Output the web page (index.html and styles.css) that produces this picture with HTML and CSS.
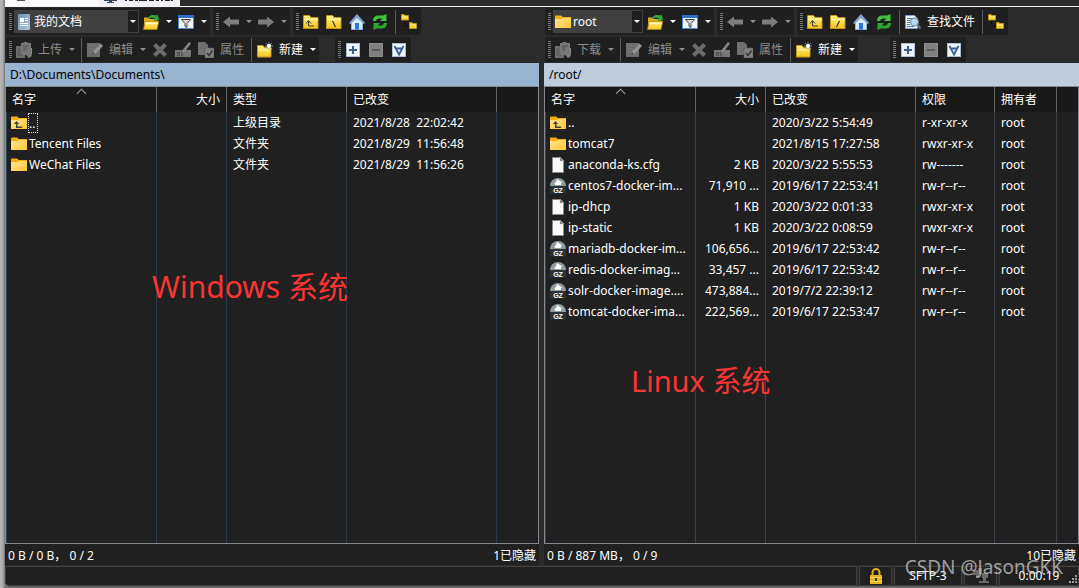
FILE: index.html
```
<!DOCTYPE html>
<html lang="zh-CN">
<head>
<meta charset="utf-8">
<title>/root/ - WinSCP</title>
<link rel="stylesheet" href="styles.css">
</head>
<body>
<svg width="0" height="0" class="defs" aria-hidden="true">
  <defs>
    <linearGradient id="gold" x1="0" y1="0" x2="0" y2="1"><stop offset="0" stop-color="#fff08a"/><stop offset="1" stop-color="#f5c518"/></linearGradient>
    <linearGradient id="amber" x1="0" y1="0" x2="1" y2="1"><stop offset="0" stop-color="#ffe696"/><stop offset="1" stop-color="#ffc62e"/></linearGradient>
    <linearGradient id="sky" x1="0" y1="0" x2="1" y2="1"><stop offset="0" stop-color="#6f93b5"/><stop offset="1" stop-color="#a9c8e2"/></linearGradient>
  </defs>
  <symbol id="i-docs" viewBox="0 0 16 16"><rect x="2" y="0" width="12" height="16" rx="1" fill="url(#sky)"/><path d="M4 4h4v4H4z" fill="#fff"/><path d="M9 4.500h3M9 6.500h3M4 9.500h8M4 11.500h8" stroke="#fff"/></symbol>
  <symbol id="i-folder" viewBox="0 0 16 16"><path d="M0 2.500Q0 1.500 1 1.500H6Q7 1.500 7.500 3H16V7H0z" fill="#f7ae0a"/><path d="M0 5H6.500L8 4H16V13.500Q16 14 15.500 14H.5Q0 14 0 13.500z" fill="url(#amber)"/></symbol>
  <symbol id="i-up" viewBox="0 0 16 16"><use href="#i-folder"/><path d="M3 9L5.500 6 8 9zM5 8h1.500v3.500H11V13H5z" fill="#424242"/></symbol>
  <symbol id="i-open" viewBox="0 0 16 16"><path d="M1 3.500h5l1 1.500h7V10H1z" fill="#d9ac20"/><path d="M.5 15.500L2 7.500H15.700L14 15.500z" fill="url(#gold)" stroke="#b88a10" stroke-width=".7"/><path d="M2.500 9.500H14.500" stroke="#fff8c0"/><path d="M5 5Q6 .5 10.500 1L13.500 1.500 14.500 0 16 6 10 7 11.500 4.500Q8 3 5 5z" fill="#2fa43b"/></symbol>
  <symbol id="i-filter" viewBox="0 0 16 16"><rect x=".5" y="1.500" width="15" height="13" fill="#eef4fb" stroke="#4f86cf"/><path d="M0 1h16v3H0z" fill="#2f6fc9"/><path d="M3.500 5.500h9L9 9.500V13.500L7 12.500V9.500z" fill="#dcdcdc" stroke="#444"/></symbol>
  <symbol id="i-back" viewBox="0 0 16 16"><path d="M0 8L7 2.500V5.500H16V10.500H7V13.500z" fill="#7d7d7d"/></symbol>
  <symbol id="i-fwd" viewBox="0 0 16 16"><path d="M16 8L9 2.500V5.500H0V10.500H9V13.500z" fill="#7d7d7d"/></symbol>
  <symbol id="i-yfold" viewBox="0 0 16 16"><path d="M.5 2Q.5 1.500 1 1.500H6.500L8 3.500H15V14.500H.5z" fill="url(#gold)" stroke="#c5971a"/><path d="M1 5.500h14" stroke="#fff6b0"/></symbol>
  <symbol id="i-parent" viewBox="0 0 16 16"><use href="#i-yfold"/><path d="M3 9.500L5.500 6.500 8 9.500M5.500 7V12H11" stroke="#3c3c3c" fill="none"/></symbol>
  <symbol id="i-bslash" viewBox="0 0 16 16"><use href="#i-yfold"/><path d="M6.500 7L9.500 13" stroke="#3c3c3c" stroke-width="1.200"/></symbol>
  <symbol id="i-slash" viewBox="0 0 16 16"><use href="#i-yfold"/><path d="M9.500 7L6.500 13" stroke="#3c3c3c" stroke-width="1.200"/></symbol>
  <symbol id="i-home" viewBox="0 0 16 16"><path d="M2.500 7.500L8 2.500 13.500 7.500V15.500H2.500z" fill="#dcebfa" stroke="#8fb4de"/><path d="M0 9L8 0 16 9 14.800 10 8 4 1.200 10z" fill="#7fa3d0"/><path d="M6 9h4v6.500H6z" fill="#2a78e0"/></symbol>
  <symbol id="i-refresh" viewBox="0 0 16 16"><path d="M1 7Q1 1.500 6.500 1.500H11.500L14.500 0V7H8L10.500 4.500H7Q4.500 4.500 4 7z" fill="#43c03e"/><path d="M15 9Q15 14.500 9.500 14.500H4.500L1.500 16V9H8L5.500 11.500H9Q11.500 11.500 12 9z" fill="#2ea82c"/></symbol>
  <symbol id="i-sync" viewBox="0 0 16 16"><path d="M.5.5H3L4 1.500H7.500V6H.5zM8.500 8.500H11L12 9.500H15.500V14.500H8.500z" fill="#f3cf2b" stroke="#c39a18" stroke-width=".8"/><path d="M1 3h6M9 11h6" stroke="#fff3a0"/><path d="M3.500 7v5H8" stroke="#050505" stroke-dasharray="1 1" fill="none"/></symbol>
  <symbol id="i-find" viewBox="0 0 16 16"><path d="M.5 1.500h9l3 3V14.500H.5z" fill="#eaf2fb" stroke="#7fa0c8"/><path d="M2 4.500h6M2 6.500h3M2 8.500h3M2 10.500h3M2 12.500h7" stroke="#5b7fb0"/><circle cx="9.500" cy="8" r="4" fill="#b9d8f2" stroke="#6d8299"/><path d="M12.500 11L15.500 14.500" stroke="#60738a" stroke-width="2"/></symbol>
  <symbol id="i-transfer" viewBox="0 0 16 16"><path d="M0 4h9v12H0z" fill="#6e6e6e"/><path d="M5 1h2l1-1h3l1 1h3v10l1 3-3 2-3-3H5z" fill="#777"/><path d="M1.500 7h3M1.500 9h3M1.500 11h3M1.500 13h5M7 4h6M7 6h4M7 8h3" stroke="#545454"/><path d="M15.500 6v6l-3 2.500" stroke="#8a8a8a" fill="none"/></symbol>
  <symbol id="i-edit" viewBox="0 0 16 16"><path d="M0 1h13v14H0z" fill="#6c6c6c"/><path d="M2 4h7M2 7h5M2 10h3" stroke="#7d7d7d"/><path d="M5 13L6 9.500 13.500 1.500 16 4 8.500 12z" fill="#929292"/><path d="M5 13l1-3 2 2z" fill="#444"/></symbol>
  <symbol id="i-delete" viewBox="0 0 16 16"><path d="M2.500 2.500L13.500 13.500M13.500 2.500L2.500 13.500" stroke="#6c6c6c" stroke-width="4"/></symbol>
  <symbol id="i-rename" viewBox="0 0 16 16"><path d="M0 8h16v7H0z" fill="#777"/><path d="M2 10l3 4M5 10l-3 4M7 9.500v5" stroke="#3d3d3d"/><path d="M7 11L8 7.500 14 0 16 1.500 10 9.500z" fill="#858585"/></symbol>
  <symbol id="i-props" viewBox="0 0 16 16"><path d="M0 0h7l3 3v10H0z" fill="#707070"/><path d="M7 6h9v10H7z" fill="#808080" stroke="#5f5f5f" stroke-width=".6"/><path d="M9 11l2 2.500L14.500 8.500" stroke="#393939" stroke-width="1.500" fill="none"/></symbol>
  <symbol id="i-new" viewBox="0 0 16 16"><path d="M.5 3.500H6L7.500 5.500H14V15H.5z" fill="url(#gold)" stroke="#c5971a"/><path d="M1 8h13" stroke="#fff6b0"/><path d="M12 0v8M8 4h8M9 1l6 6M15 1L9 7" stroke="#8ea9c8" stroke-width=".8"/><circle cx="12" cy="4" r="2" fill="#fff"/></symbol>
  <symbol id="i-plus" viewBox="0 0 16 16"><rect x="1.500" y="1.500" width="13" height="13" fill="#f0f5fb" stroke="#a9c1dd"/><path d="M8 4v8M4 8h8" stroke="#3b5f92" stroke-width="2"/></symbol>
  <symbol id="i-minus" viewBox="0 0 16 16"><rect x="1.500" y="1.500" width="13" height="13" fill="#808080" stroke="#8b8b8b"/><path d="M4 8h8" stroke="#5c5c5c" stroke-width="2"/></symbol>
  <symbol id="i-select" viewBox="0 0 16 16"><rect x="1.500" y="1.500" width="13" height="13" fill="#f0f5fb" stroke="#a9c1dd"/><path d="M3.500 4L8 12.500 12.500 4M5 6.500h6" stroke="#3b5f92" stroke-width="1.800" fill="none"/></symbol>
  <symbol id="i-file" viewBox="0 0 16 16"><path d="M2.500.5H10.500L13.500 3.500V15.500H2.500z" fill="#fafafa" stroke="#8b8b8b"/><path d="M10 .5V4h3.500z" fill="#555" stroke="#ccc" stroke-width=".6"/></symbol>
  <symbol id="i-gz" viewBox="0 0 16 16"><path d="M0 8A8 8 0 0 1 16 8z" fill="#8f9d9d"/><path d="M7 1L12.500 4.500 11 5V7H5V5.500L3.500 6 6 4z" fill="#fff"/><path d="M0 8h16v7.500H0z" fill="#2d3232"/><text x="8" y="14.500" text-anchor="middle" font-family="Liberation Sans, sans-serif" font-size="7" font-weight="700" fill="#fff">GZ</text></symbol>
  <symbol id="i-lock" viewBox="0 0 16 16"><path d="M4.500 8V4.500a3.500 3.500 0 0 1 7 0V8" stroke="#e5ad1c" stroke-width="2" fill="none"/><path d="M2 7h12v9H2z" fill="#e9b320"/><path d="M2 9.500h12M2 13.500h12" stroke="#f8d765"/><path d="M8 10v3" stroke="#40300a" stroke-width="2"/></symbol>
  <symbol id="i-zip" viewBox="0 0 16 16"><path d="M0 2h5V0h4v6H6v3H3V7H0zM9 5h6v5h-2v3h3v2H6v-2h4v-3H9z" fill="#696969"/></symbol>
</svg>

<div class="window">
  <header class="tabs">
    <div class="tab"><svg class="sliver" viewBox="0 0 20 6"><path d="M4 0h8" stroke="#4a5266" stroke-width="2"/></svg></div>
    <div class="tab current"><svg class="sliver" viewBox="0 0 20 6"><path d="M3 0h13v1H3zM8 1h3v1h2v1H6V2h2z" fill="#38455e"/></svg><svg class="marks" viewBox="0 0 50 6"><path d="M1 0v1M4 0h4M10 0h3M14 0h8M24 0h5M31 0h3M36 0h2M40 0h5M47 0v1" stroke="#20242c" stroke-width="2" fill="none"/></svg></div>
  </header>

  <main class="panes">
    <section class="pane local">
      <div class="bars">
        <div class="barrow main-row">
          <div class="band"><i class="grip"></i>
            <button class="combo"><svg><use href="#i-docs"/></svg><span>我的文档</span><i class="arrow"></i></button>
            <button class="tool" aria-label="打开"><svg><use href="#i-open"/></svg></button><button class="drop" aria-label="更多"></button>
            <button class="tool" aria-label="过滤"><svg><use href="#i-filter"/></svg></button><button class="drop" aria-label="更多"></button>
          </div>
          <div class="band"><i class="grip"></i>
            <button class="tool" aria-label="后退"><svg><use href="#i-back"/></svg></button><button class="drop dim" aria-label="更多"></button>
            <button class="tool" aria-label="前进"><svg><use href="#i-fwd"/></svg></button><button class="drop dim" aria-label="更多"></button>
          </div>
          <div class="band"><i class="grip"></i>
            <button class="tool" aria-label="上级目录"><svg><use href="#i-parent"/></svg></button>
            <button class="tool" aria-label="根目录"><svg><use href="#i-bslash"/></svg></button>
            <button class="tool" aria-label="主目录"><svg><use href="#i-home"/></svg></button>
            <button class="tool" aria-label="刷新"><svg><use href="#i-refresh"/></svg></button>
            <i class="sep"></i>
            <button class="tool" aria-label="目录树"><svg><use href="#i-sync"/></svg></button>
          </div>
        </div>
        <div class="barrow">
          <div class="band"><i class="grip"></i>
            <button class="tool dim"><svg><use href="#i-transfer"/></svg>上传</button><button class="drop dim" aria-label="更多"></button>
            <i class="sep"></i>
            <button class="tool dim"><svg><use href="#i-edit"/></svg>编辑</button><button class="drop dim" aria-label="更多"></button>
            <button class="tool" aria-label="删除"><svg><use href="#i-delete"/></svg></button>
            <button class="tool" aria-label="重命名"><svg><use href="#i-rename"/></svg></button>
            <button class="tool dim"><svg><use href="#i-props"/></svg>属性</button>
            <i class="sep"></i>
            <button class="tool"><svg><use href="#i-new"/></svg>新建</button><button class="drop" aria-label="更多"></button>
          </div>
          <div class="band select-band"><i class="grip"></i>
            <button class="tool" aria-label="选择"><svg><use href="#i-plus"/></svg></button>
            <button class="tool" aria-label="取消选择"><svg><use href="#i-minus"/></svg></button>
            <button class="tool" aria-label="选择过滤"><svg><use href="#i-select"/></svg></button>
          </div>
        </div>
      </div>
      <div class="path">D:\Documents\Documents\</div>
      <div class="list">
        <table>
          <colgroup><col class="c-name"><col class="c-size"><col class="c-type"><col class="c-date"><col></colgroup>
          <thead><tr><th class="sorted">名字</th><th class="num">大小</th><th>类型</th><th>已改变</th><th></th></tr></thead>
          <tbody>
            <tr><td><div class="name"><svg><use href="#i-up"/></svg><span class="focus">..</span></div></td><td></td><td>上级目录</td><td>2021/8/28&nbsp; 22:02:42</td><td></td></tr>
            <tr><td><div class="name"><svg><use href="#i-folder"/></svg>Tencent Files</div></td><td></td><td>文件夹</td><td>2021/8/29&nbsp; 11:56:48</td><td></td></tr>
            <tr><td><div class="name"><svg><use href="#i-folder"/></svg>WeChat Files</div></td><td></td><td>文件夹</td><td>2021/8/29&nbsp; 11:56:26</td><td></td></tr>
            <tr class="rest"><td></td><td></td><td></td><td></td><td></td></tr>
          </tbody>
        </table>
        <div class="note note-windows">Windows 系统</div>
      </div>
      <div class="status"><span>0 B / 0 B， 0 / 2</span><span>1已隐藏</span></div>
    </section>

    <section class="pane remote">
      <div class="bars">
        <div class="barrow main-row">
          <div class="band"><i class="grip"></i>
            <button class="combo"><svg><use href="#i-folder"/></svg><span>root</span><i class="arrow"></i></button>
            <button class="tool" aria-label="打开"><svg><use href="#i-open"/></svg></button><button class="drop" aria-label="更多"></button>
            <button class="tool" aria-label="过滤"><svg><use href="#i-filter"/></svg></button><button class="drop" aria-label="更多"></button>
          </div>
          <div class="band"><i class="grip"></i>
            <button class="tool" aria-label="后退"><svg><use href="#i-back"/></svg></button><button class="drop dim" aria-label="更多"></button>
            <button class="tool" aria-label="前进"><svg><use href="#i-fwd"/></svg></button><button class="drop dim" aria-label="更多"></button>
          </div>
          <div class="band"><i class="grip"></i>
            <button class="tool" aria-label="上级目录"><svg><use href="#i-parent"/></svg></button>
            <button class="tool" aria-label="根目录"><svg><use href="#i-slash"/></svg></button>
            <button class="tool" aria-label="主目录"><svg><use href="#i-home"/></svg></button>
            <button class="tool" aria-label="刷新"><svg><use href="#i-refresh"/></svg></button>
            <i class="sep"></i>
            <button class="tool"><svg><use href="#i-find"/></svg>查找文件</button>
            <i class="sep"></i>
            <button class="tool" aria-label="目录树"><svg><use href="#i-sync"/></svg></button>
          </div>
        </div>
        <div class="barrow">
          <div class="band"><i class="grip"></i>
            <button class="tool dim"><svg><use href="#i-transfer"/></svg>下载</button><button class="drop dim" aria-label="更多"></button>
            <i class="sep"></i>
            <button class="tool dim"><svg><use href="#i-edit"/></svg>编辑</button><button class="drop dim" aria-label="更多"></button>
            <button class="tool" aria-label="删除"><svg><use href="#i-delete"/></svg></button>
            <button class="tool" aria-label="重命名"><svg><use href="#i-rename"/></svg></button>
            <button class="tool dim"><svg><use href="#i-props"/></svg>属性</button>
            <i class="sep"></i>
            <button class="tool"><svg><use href="#i-new"/></svg>新建</button><button class="drop" aria-label="更多"></button>
          </div>
          <div class="band select-band"><i class="grip"></i>
            <button class="tool" aria-label="选择"><svg><use href="#i-plus"/></svg></button>
            <button class="tool" aria-label="取消选择"><svg><use href="#i-minus"/></svg></button>
            <button class="tool" aria-label="选择过滤"><svg><use href="#i-select"/></svg></button>
          </div>
        </div>
      </div>
      <div class="path">/root/</div>
      <div class="list">
        <table>
          <colgroup><col class="c-name"><col class="c-size"><col class="c-date"><col class="c-perm"><col class="c-owner"><col></colgroup>
          <thead><tr><th class="sorted">名字</th><th class="num">大小</th><th>已改变</th><th>权限</th><th>拥有者</th><th></th></tr></thead>
          <tbody>
            <tr><td><div class="name"><svg><use href="#i-up"/></svg>..</div></td><td class="num"></td><td>2020/3/22 5:54:49</td><td>r-xr-xr-x</td><td>root</td><td></td></tr>
            <tr><td><div class="name"><svg><use href="#i-folder"/></svg>tomcat7</div></td><td class="num"></td><td>2021/8/15 17:27:58</td><td>rwxr-xr-x</td><td>root</td><td></td></tr>
            <tr><td><div class="name"><svg><use href="#i-file"/></svg>anaconda-ks.cfg</div></td><td class="num">2 KB</td><td>2020/3/22 5:55:53</td><td>rw-------</td><td>root</td><td></td></tr>
            <tr><td><div class="name"><svg><use href="#i-gz"/></svg>centos7-docker-im...</div></td><td class="num">71,910 ...</td><td>2019/6/17 22:53:41</td><td>rw-r--r--</td><td>root</td><td></td></tr>
            <tr><td><div class="name"><svg><use href="#i-file"/></svg>ip-dhcp</div></td><td class="num">1 KB</td><td>2020/3/22 0:01:33</td><td>rwxr-xr-x</td><td>root</td><td></td></tr>
            <tr><td><div class="name"><svg><use href="#i-file"/></svg>ip-static</div></td><td class="num">1 KB</td><td>2020/3/22 0:08:59</td><td>rwxr-xr-x</td><td>root</td><td></td></tr>
            <tr><td><div class="name"><svg><use href="#i-gz"/></svg>mariadb-docker-im...</div></td><td class="num">106,656...</td><td>2019/6/17 22:53:42</td><td>rw-r--r--</td><td>root</td><td></td></tr>
            <tr><td><div class="name"><svg><use href="#i-gz"/></svg>redis-docker-imag...</div></td><td class="num">33,457 ...</td><td>2019/6/17 22:53:42</td><td>rw-r--r--</td><td>root</td><td></td></tr>
            <tr><td><div class="name"><svg><use href="#i-gz"/></svg>solr-docker-image....</div></td><td class="num">473,884...</td><td>2019/7/2 22:39:12</td><td>rw-r--r--</td><td>root</td><td></td></tr>
            <tr><td><div class="name"><svg><use href="#i-gz"/></svg>tomcat-docker-ima...</div></td><td class="num">222,569...</td><td>2019/6/17 22:53:47</td><td>rw-r--r--</td><td>root</td><td></td></tr>
            <tr class="rest"><td></td><td></td><td></td><td></td><td></td><td></td></tr>
          </tbody>
        </table>
        <div class="note note-linux">Linux 系统</div>
      </div>
      <div class="status"><span>0 B / 887 MB， 0 / 9</span><span>10已隐藏</span></div>
    </section>
  </main>

  <footer class="footer">
    <div class="cell grow"></div>
    <div class="cell small"><svg><use href="#i-lock"/></svg></div>
    <div class="cell protocol">SFTP-3</div>
    <div class="cell small"><svg><use href="#i-zip"/></svg></div>
    <div class="cell time">0:00:19<svg class="resize" viewBox="0 0 10 10"><path d="M7 0h2v2H7zM4 3h2v2H4zM7 3h2v2H7zM1 6h2v2H1zM4 6h2v2H4zM7 6h2v2H7z" fill="#a0a0a0"/></svg></div>
  </footer>
  <div class="watermark">CSDN @JasonGKK</div>
</div>
</body>
</html>
```
FILE: styles.css
```
* { box-sizing: border-box; }

body {
  margin: 0;
  height: 100vh;
  padding: 0 0 1px 5px;
  background: linear-gradient(90deg, #b8b8b8 0, #a8a8a8 3px, #707070 5px);
  color: #fff;
  font: 12px/20px "Noto Sans", "Noto Sans CJK SC", sans-serif;
}

.defs { position: absolute; }

svg { width: 16px; height: 16px; flex: none; display: block; }

button {
  border: 0;
  padding: 0;
  background: none;
  color: inherit;
  font: inherit;
}

.window {
  position: relative;
  height: 100%;
  display: flex;
  flex-direction: column;
  background: #2b2b2b;
  border-bottom: 1px solid #5a5a5a;
  border-bottom-left-radius: 6px;
  overflow: hidden;
}

.tabs {
  height: 7px;
  flex: none;
  display: flex;
  border-bottom: 1px solid #f4f4f4;
}

.tab { width: 94px; background: #fafafa; padding-left: 8px; }
.tab.current { width: 81px; background: #f0f0f5; padding-left: 2px; display: flex; gap: 4px; }
.tab .sliver { width: 20px; height: 6px; }
.tab .marks { width: 50px; height: 6px; }

.panes {
  flex: 1;
  min-height: 0;
  display: grid;
  grid-template-columns: 534fr 535fr;
  gap: 5px;
}

.pane { display: flex; flex-direction: column; min-width: 0; min-height: 0; }

.bars { padding: 1px; display: flex; flex-direction: column; gap: 2px; }
.barrow { display: flex; height: 25px; gap: 3px; }
.main-row { height: 27px; }

.band {
  display: flex;
  align-items: center;
  flex: none;
  padding-left: 3px;
  background: #1f1f1f;
  border-radius: 2px;
}

.local .select-band { margin-left: 13px; }
.remote .select-band { margin-left: 29px; }

.grip {
  width: 3px;
  height: 18px;
  margin-right: 1px;
  background: repeating-linear-gradient(#777 0 1px, transparent 1px 2px);
}

.sep { width: 1px; height: 24px; margin: 0 2px 0 3px; background: #5c5c5c; }

.combo {
  display: flex;
  align-items: center;
  gap: 2px;
  width: 125px;
  height: 23px;
  margin: 0 1px;
  padding-left: 2px;
  background: #404040;
  text-align: left;
}
.remote .combo { width: 90px; }
.combo span { flex: 1; }
.combo .arrow { width: 12px; height: 23px; border: 1px solid #404040; background: #1f1f1f; }

.tool {
  display: flex;
  align-items: center;
  gap: 6px;
  height: 23px;
  padding: 0 4px 0 3px;
}
.tool.dim { color: #8c8c8c; }

.drop { width: 12px; height: 23px; }
.drop, .combo .arrow { display: grid; place-items: center; }
.drop::after, .combo .arrow::after {
  content: "";
  border: 3px solid transparent;
  border-top-color: #fff;
  border-bottom: 0;
}
.drop.dim::after { border-top-color: #909090; }

.path {
  height: 23px;
  padding: 0 5px;
  background: #99b4d1;
  color: #000;
  line-height: 23px;
}
.remote .path { background: #bfcddb; }

.list {
  position: relative;
  flex: 1;
  min-height: 0;
  border: 1px solid #828790;
  background: #202020;
}

table {
  width: 100%;
  height: 100%;
  table-layout: fixed;
  border-collapse: separate;
  border-spacing: 0;
}

.c-name { width: 151px; }
.c-size { width: 70px; }
.c-type { width: 120px; }
.c-date { width: 150px; }
.c-perm { width: 79px; }
.c-owner { width: 62px; }

th, td {
  height: 21px;
  padding: 0 6px;
  text-align: left;
  font-weight: 400;
  white-space: nowrap;
  line-height: 20px;
  border-right: 1px solid #3a4048;
}
.local td { border-right-color: #2c3948; }
th { position: relative; height: 25px; background: #191919; border-right-color: #636363; }
th:last-child, td:last-child { border-right: 0; }
.num { text-align: right; }
td:first-child { padding: 0 0 0 4px; border-left: 1px solid #33475c; }
.rest td { height: auto; }

.sorted::after {
  content: "";
  position: absolute;
  top: 3px;
  left: 50%;
  width: 6px;
  height: 6px;
  margin-left: -3px;
  border: 1px solid #a0a0a0;
  border-right: 0;
  border-bottom: 0;
  transform: rotate(45deg);
}

.name { display: flex; align-items: center; gap: 2px; }
.focus { outline: 1px dotted #ddd; height: 18px; width: 8px; }

.note {
  position: absolute;
  color: #fb3434;
  font-size: 29px;
  line-height: 40px;
  white-space: nowrap;
}
.note-windows { left: 146px; top: 180px; font-size: 30px; }
.note-linux { left: 86px; top: 274px; }

.status {
  display: flex;
  justify-content: space-between;
  height: 22px;
  padding: 1px 3px 0;
  line-height: 22px;
  background: #202020;
  border-bottom: 1px solid #2b2b2b;
}

.footer { display: flex; gap: 2px; height: 20px; flex: none; }
.cell {
  display: flex;
  align-items: center;
  justify-content: center;
  border: 1px solid #404040;
  background: #202020;
}
.cell.grow { flex: 1; }
.cell.small { width: 33px; }
.cell.protocol { width: 68px; }
.cell.time { position: relative; width: 80px; }
.resize { position: absolute; right: 0; bottom: 0; width: 10px; height: 10px; }

.watermark {
  position: absolute;
  right: 16px;
  bottom: 5px;
  color: rgba(215, 215, 215, .7);
  font-size: 19px;
  line-height: 28px;
}
```
